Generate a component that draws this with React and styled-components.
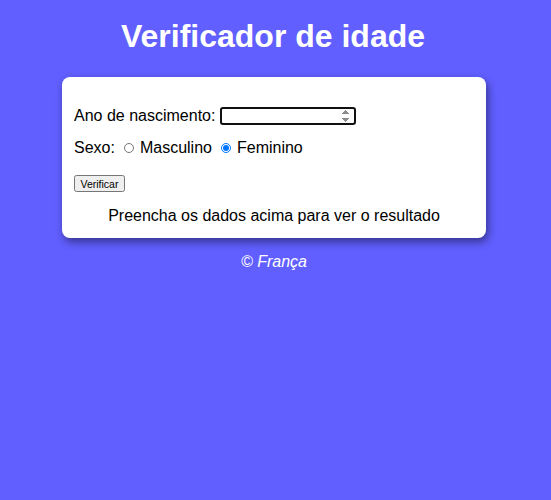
import styled, { createGlobalStyle } from "styled-components";

const Global = createGlobalStyle`
  html, body {
    margin: 0;
    background: #615fff;
    font-family: "Liberation Sans", Arial, sans-serif;
  }
`;

const Page = styled.div`
  display: flex;
  flex-direction: column;
  align-items: center;
  padding-top: 18px;
`;

const Title = styled.h1`
  margin: 0 0 0 -5px;
  font-size: 32px;
  line-height: 37px;
  font-weight: bold;
  color: #ffffff;
`;

const Card = styled.section`
  box-sizing: border-box;
  width: 424px;
  margin: 22px 0 0 -3px;
  padding: 28px 12px 13px;
  background: #ffffff;
  border-radius: 8px;
  box-shadow: 2px 4px 8px rgba(0, 0, 0, 0.45);
  font-size: 16px;
  color: #000;
`;

const Row = styled.div`
  display: flex;
  align-items: center;
  height: 22px;
  margin-bottom: ${(p) => p.gap || 0}px;
`;

const YearInput = styled.input`
  box-sizing: border-box;
  width: 136px;
  height: 18px;
  margin-left: 5px;
  border: 2px solid #101010;
  border-radius: 3px;
  outline: none;
  font-size: 12px;
  padding: 0 1px 0 2px;

  &::-webkit-inner-spin-button {
    opacity: 1;
    height: 14px;
  }
`;

const Radio = styled.input`
  margin: 0 6px 0 9px;
  width: 10px;
  height: 10px;
`;

const Button = styled.button`
  display: block;
  font-family: "Liberation Sans", Arial, sans-serif;
  font-size: 10.5px;
  height: 17px;
  width: 51px;
  padding: 0;
  margin-top: 16px;
`;

const Result = styled.p`
  margin: 15px 0 0;
  text-align: center;
  line-height: 18px;
`;

const Footer = styled.p`
  margin: 15px 0 0 -3px;
  color: #fff;
  font-style: italic;
  line-height: 18px;
  font-size: 16px;
`;

export default function App() {
  return (
    <Page>
      <Global />
      <Title>Verificador de idade</Title>
      <Card>
        <Row gap={10}>
          Ano de nascimento:
          <YearInput type="number" />
        </Row>
        <Row>
          Sexo:
          <Radio type="radio" name="sexo" />
          Masculino
          <Radio type="radio" name="sexo" defaultChecked />
          Feminino
        </Row>
        <Button>Verificar</Button>
        <Result>Preencha os dados acima para ver o resultado</Result>
      </Card>
      <Footer>© França</Footer>
    </Page>
  );
}
